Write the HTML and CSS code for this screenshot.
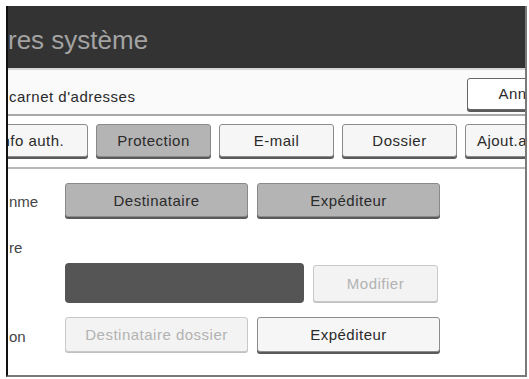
FILE: index.html
```html
<!DOCTYPE html>
<html lang="fr">
<head>
    <meta charset="UTF-8">
    <meta name="viewport" content="width=device-width, initial-scale=1.0">
    <title>Paramètres système</title>
    <link rel="stylesheet" href="styles.css">
</head>
<body>
    <div class="screen">
        <div class="title">res système</div>

        <div class="bar">
            <span class="bar-text">carnet d'adresses</span>
            <button class="btn cancel">Annuler</button>
        </div>

        <div class="tabs">
            <button class="btn tab">Info auth.</button>
            <button class="btn tab on">Protection</button>
            <button class="btn tab">E-mail</button>
            <button class="btn tab">Dossier</button>
            <button class="btn tab">Ajout.au titre</button>
        </div>

        <div class="content">
            <div class="row row-a">
                <span class="label">nme</span>
                <button class="btn wide on">Destinataire</button>
                <button class="btn wide on">Expéditeur</button>
            </div>
            <div class="row row-text">
                <span class="label">re</span>
            </div>
            <div class="row row-b">
                <span class="label"></span>
                <div class="field"></div>
                <button class="btn mid off">Modifier</button>
            </div>
            <div class="row row-c">
                <span class="label">on</span>
                <button class="btn wide off">Destinataire dossier</button>
                <button class="btn wide">Expéditeur</button>
            </div>
        </div>
    </div>
</body>
</html>
```

FILE: styles.css
```css
body {
    margin: 0;
    background: #fff;
    font-family: "Liberation Sans", Arial, sans-serif;
    color: #2a2a2a;
}
.screen {
    margin: 6px 0 0 6px;
    width: 521px;
    height: 371px;
    box-sizing: border-box;
    border-left: 2px solid #111;
    border-right: 2px solid #7a7a7a;
    border-bottom: 2px solid #7a7a7a;
    overflow: hidden;
    background: #fff;
}
.title {
    height: 62px;
    padding-top: 6px;
    box-sizing: border-box;
    line-height: 56px;
    background: #333;
    color: #a3a3a3;
    font-size: 26px;
    white-space: nowrap;
}
.bar {
    height: 48px;
    display: flex;
    align-items: center;
    justify-content: space-between;
    padding: 3px 0 0 1px;
    box-sizing: border-box;
    border-top: 2px solid #d6d6d6;
    border-bottom: 2px solid #a8a8a8;
    background: #fafafa;
    font-size: 15px;
    letter-spacing: 0.5px;
}
.bar-text {
    padding-top: 5px;
}
.btn {
    font-family: "Liberation Sans", Arial, sans-serif;
    font-size: 15px;
    letter-spacing: 0.5px;
    color: #2a2a2a;
    background: #f6f6f6;
    border: 1px solid #8c8c8c;
    border-radius: 3px;
    box-shadow: 0 2px 0 #5a5a5a;
    padding: 0;
    flex-shrink: 0;
    white-space: nowrap;
}
.btn.on {
    background: #b4b4b4;
    border-color: #8a8a8a;
}
.btn.off {
    background: #f3f3f3;
    color: #b2b2b2;
    border-color: #c9c9c9;
    box-shadow: 0 1px 0 #c0c0c0;
}
.cancel {
    width: 118px;
    height: 32px;
    margin-right: -60px;
    background: #fff;
    border-color: #666;
}
.tabs {
    height: 53px;
    display: flex;
    gap: 8px;
    margin-left: -35px;
    padding-top: 8px;
    box-sizing: border-box;
    border-bottom: 2px solid #b8b8b8;
}
.tab {
    width: 115px;
    height: 33px;
}
.content {
    padding-left: 1px;
}
.row {
    display: flex;
    align-items: center;
    gap: 9px;
}
.label {
    width: 47px;
    flex-shrink: 0;
    padding-top: 3px;
    font-size: 15px;
    color: #444;
}
.row-a {
    margin-top: 14px;
}
.row-text {
    margin-top: 19px;
    height: 20px;
}
.row-b {
    margin-top: 7px;
}
.row-c {
    margin-top: 14px;
}
.wide {
    width: 183px;
    height: 34px;
}
.row-c .wide {
    height: 35px;
}
.field {
    width: 239px;
    height: 40px;
    background: #555;
    border-radius: 4px;
    flex-shrink: 0;
}
.mid {
    width: 125px;
    height: 37px;
}
```
